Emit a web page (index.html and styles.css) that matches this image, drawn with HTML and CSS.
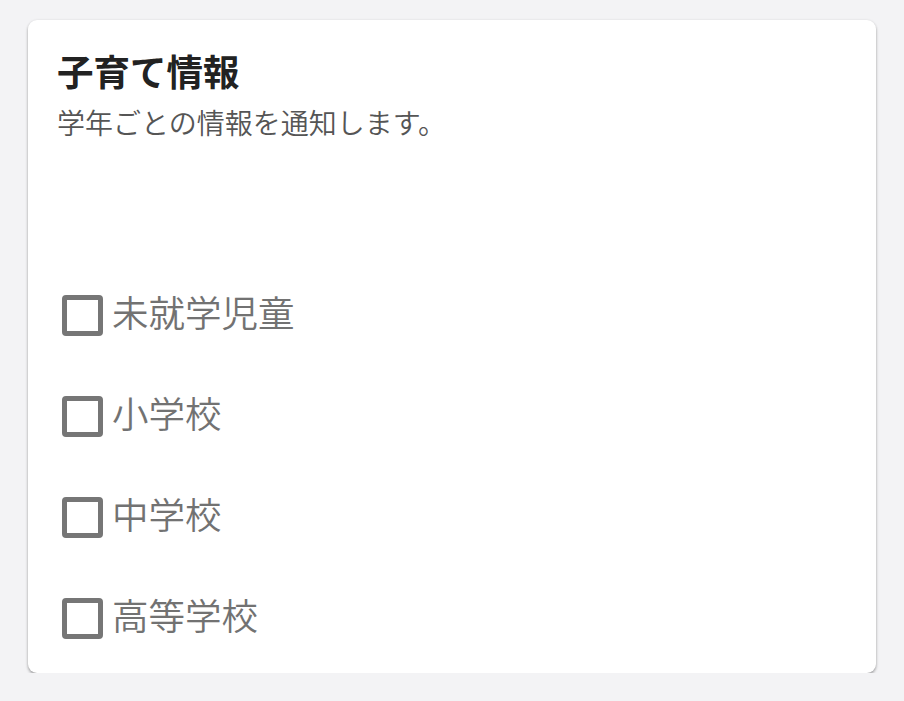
FILE: index.html
```html
<!DOCTYPE html>
<html lang="ja">
<head>
<meta charset="utf-8">
<link rel="stylesheet" href="styles.css">
</head>
<body>
<div class="card">
  <h1 class="title">子育て情報</h1>
  <p class="sub">学年ごとの情報を通知します。</p>
  <ul class="list">
    <li class="row"><span class="box"></span><span class="label">未就学児童</span></li>
    <li class="row"><span class="box"></span><span class="label">小学校</span></li>
    <li class="row"><span class="box"></span><span class="label">中学校</span></li>
    <li class="row"><span class="box"></span><span class="label">高等学校</span></li>
  </ul>
</div>
</body>
</html>
```
FILE: styles.css
```css
html, body {
  margin: 0;
  padding: 0;
  background: #f3f3f5;
  font-family: "Noto Sans CJK JP", "Noto Sans", sans-serif;
}
.card {
  box-sizing: border-box;
  margin: 20px 28px 0 28px;
  height: 653px;
  background: #ffffff;
  border-radius: 9px;
  box-shadow: 0 2px 3px rgba(0,0,0,0.32), 0 0 3px rgba(0,0,0,0.07);
  padding: 29px 29px 0 29px;
}
.title {
  margin: 0;
  font-size: 36.5px;
  line-height: 44px;
  font-weight: 700;
  color: #222222;
}
.sub {
  margin: 11px 0 0 0;
  font-size: 28px;
  line-height: 36px;
  font-weight: 350;
  color: #555555;
}
.list {
  list-style: none;
  margin: 125px 0 0 0;
  padding: 0;
}
.row {
  height: 101px;
  display: flex;
  align-items: center;
  padding-left: 5px;
}
.box {
  box-sizing: border-box;
  width: 41px;
  height: 41px;
  border: 5px solid #767676;
  border-radius: 4px;
  flex: none;
}
.label {
  margin-left: 9px;
  margin-bottom: 8px;
  font-size: 36.5px;
  line-height: 44px;
  font-weight: 350;
  color: #727272;
}
```
